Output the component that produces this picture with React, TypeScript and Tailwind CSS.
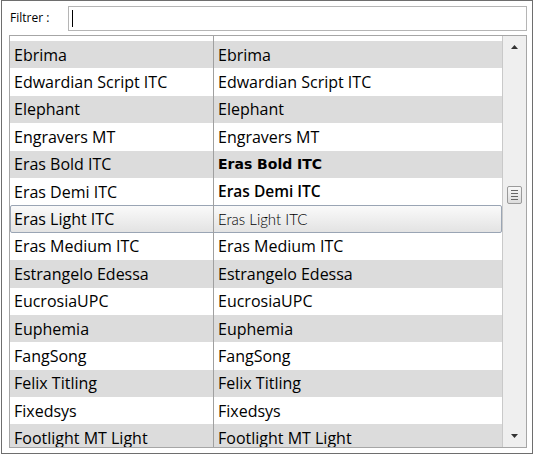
import React from "react";

const rows: { name: string; cls?: string }[] = [
  { name: "Ebrima" },
  { name: "Edwardian Script ITC" },
  { name: "Elephant" },
  { name: "Engravers MT" },
  { name: "Eras Bold ITC", cls: "font-bold [font-family:'DejaVu_Sans',sans-serif] text-[14px]" },
  { name: "Eras Demi ITC", cls: "font-semibold [font-family:'Open_Sans',sans-serif] text-[15.5px]" },
  { name: "Eras Light ITC", cls: "font-light text-[#555] [font-family:'Lato',sans-serif] text-[15px]" },
  { name: "Eras Medium ITC" },
  { name: "Estrangelo Edessa" },
  { name: "EucrosiaUPC" },
  { name: "Euphemia" },
  { name: "FangSong" },
  { name: "Felix Titling" },
  { name: "Fixedsys" },
  { name: "Footlight MT Light" },
];

export default function App() {
  return (
    <div className="w-[534px] h-[456px] bg-white overflow-hidden [font-family:'Open_Sans',sans-serif]">
      <div className="w-[532px] h-[454px] ml-[1px] border border-[#6e6e6e] bg-white flex flex-col">
        <div className="flex items-center h-[30px] pt-[4px]">
          <div className="w-[66px] pl-[8px] text-[12px] text-black">Filtrer :</div>
          <div className="w-[459px] h-[25px] border border-[#b5b5b5] bg-white flex items-center pl-[3px]">
            <div className="w-px h-[17px] bg-black" />
          </div>
        </div>
        <div className="mt-[4px] ml-[7px] w-[518px] h-[413px] border border-[#a6a6a6] flex overflow-hidden">
          <div className="flex-1 relative overflow-hidden">
            <div className="h-[5px] bg-white flex">
              <div className="w-[204px] border-r border-[#a0a0a0]" />
            </div>
            {rows.map((r, i) => {
              const sel = i === 6;
              const bg = sel ? "" : i % 2 === 0 ? "bg-[#dcdcdc]" : "bg-white";
              return (
                <div key={r.name} className={`relative h-[27.4px] flex items-center ${bg}`}>
                  {sel && (
                    <div className="absolute inset-0 rounded-[2px] border border-[#9aa5b4] bg-gradient-to-b from-[#fafafa] to-[#e3e3e3]" />
                  )}
                  <div className="relative w-[204px] h-full flex items-center pl-[4px] border-r border-[#a0a0a0] text-[16px] text-black whitespace-nowrap">
                    {r.name}
                  </div>
                  <div className={`relative flex-1 h-full flex items-center pl-[4px] text-black whitespace-nowrap ${r.cls ?? "text-[16px]"}`}>
                    {r.name}
                  </div>
                </div>
              );
            })}
          </div>
          <div className="w-[24px] h-full bg-[#efefef] border-l border-[#c9c9c9] flex flex-col items-center relative">
            <div className="h-[18px] flex items-center justify-center mt-[2px]">
              <svg width="9" height="6" viewBox="0 0 9 6"><path d="M4.5 1 L8 5 L1 5 Z" fill="#333" /></svg>
            </div>
            <div className="absolute top-[150px] left-[4px] w-[15px] h-[18px] rounded-[2px] border border-[#9a9a9a] bg-gradient-to-b from-[#f8f8f8] to-[#dcdcdc] flex flex-col items-center justify-center gap-[2px]">
              <div className="w-[7px] h-px bg-[#666]" />
              <div className="w-[7px] h-px bg-[#666]" />
              <div className="w-[7px] h-px bg-[#666]" />
              <div className="w-[7px] h-px bg-[#666]" />
            </div>
            <div className="mt-auto h-[18px] flex items-center justify-center mb-[2px]">
              <svg width="9" height="6" viewBox="0 0 9 6"><path d="M1 1 L8 1 L4.5 5 Z" fill="#333" /></svg>
            </div>
          </div>
        </div>
      </div>
    </div>
  );
}
